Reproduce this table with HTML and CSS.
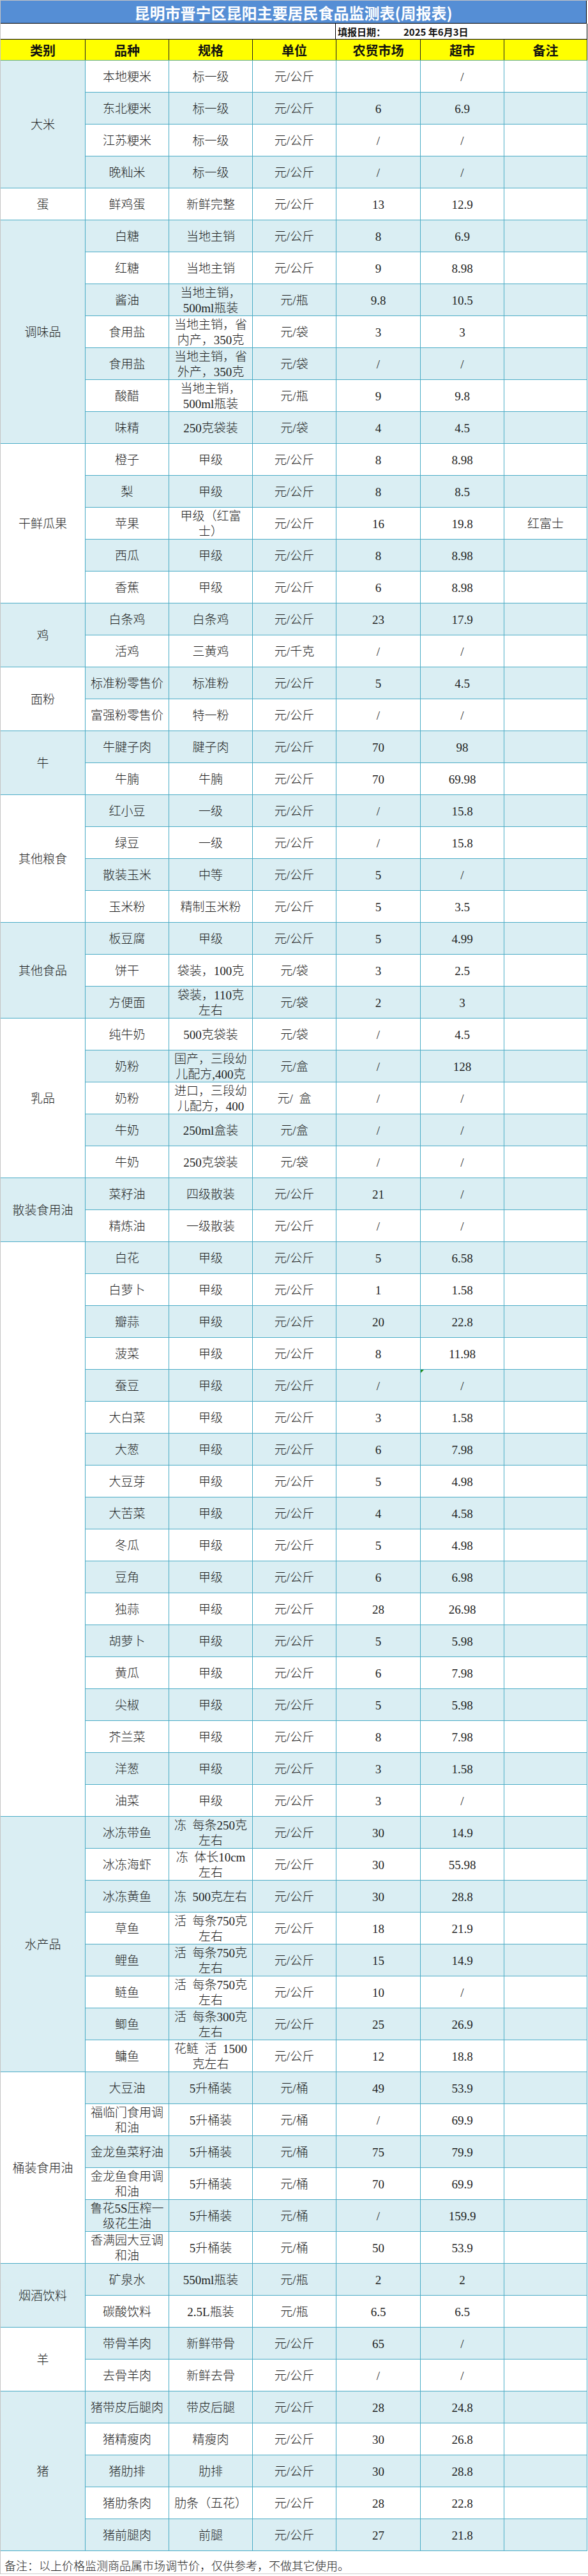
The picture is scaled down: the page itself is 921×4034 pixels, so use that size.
FILE: index.html
```html
<!DOCTYPE html>
<html lang="zh-CN">
<head>
<meta charset="utf-8">
<title>昆明市晋宁区昆阳主要居民食品监测表(周报表)</title>
<link rel="stylesheet" href="styles.css">
</head>
<body>
<div class="sheet">
  <div class="title">昆明市晋宁区昆阳主要居民食品监测表(周报表)</div>
  <div class="daterow">
    <div class="blank"></div>
    <div class="datecell"><span class="dlabel">填报日期：</span><span>2025 年6月3日</span></div>
  </div>
  <div class="head">
    <div>类别</div><div>品种</div><div>规格</div><div>单位</div><div>农贸市场</div><div>超市</div><div>备注</div>
  </div>
  <div class="grid">
    <div class="k s4 b">大米</div>
    <div class="r"><div>本地粳米</div><div>标一级</div><div>元/公斤</div><div></div><div>/</div><div></div></div>
    <div class="r b"><div>东北粳米</div><div>标一级</div><div>元/公斤</div><div>6</div><div>6.9</div><div></div></div>
    <div class="r"><div>江苏粳米</div><div>标一级</div><div>元/公斤</div><div>/</div><div>/</div><div></div></div>
    <div class="r b"><div>晚籼米</div><div>标一级</div><div>元/公斤</div><div>/</div><div>/</div><div></div></div>

    <div class="k s1">蛋</div>
    <div class="r"><div>鲜鸡蛋</div><div>新鲜完整</div><div>元/公斤</div><div>13</div><div>12.9</div><div></div></div>

    <div class="k s7 b">调味品</div>
    <div class="r b"><div>白糖</div><div>当地主销</div><div>元/公斤</div><div>8</div><div>6.9</div><div></div></div>
    <div class="r"><div>红糖</div><div>当地主销</div><div>元/公斤</div><div>9</div><div>8.98</div><div></div></div>
    <div class="r b"><div>酱油</div><div>当地主销，<br>500ml瓶装</div><div>元/瓶</div><div>9.8</div><div>10.5</div><div></div></div>
    <div class="r"><div>食用盐</div><div>当地主销，省<br>内产，350克</div><div>元/袋</div><div>3</div><div>3</div><div></div></div>
    <div class="r b"><div>食用盐</div><div>当地主销，省<br>外产，350克</div><div>元/袋</div><div>/</div><div>/</div><div></div></div>
    <div class="r"><div>酸醋</div><div>当地主销，<br>500ml瓶装</div><div>元/瓶</div><div>9</div><div>9.8</div><div></div></div>
    <div class="r b"><div>味精</div><div>250克袋装</div><div>元/袋</div><div>4</div><div>4.5</div><div></div></div>

    <div class="k s5">干鲜瓜果</div>
    <div class="r"><div>橙子</div><div>甲级</div><div>元/公斤</div><div>8</div><div>8.98</div><div></div></div>
    <div class="r b"><div>梨</div><div>甲级</div><div>元/公斤</div><div>8</div><div>8.5</div><div></div></div>
    <div class="r"><div>苹果</div><div>甲级（红富<br>士）</div><div>元/公斤</div><div>16</div><div>19.8</div><div>红富士</div></div>
    <div class="r b"><div>西瓜</div><div>甲级</div><div>元/公斤</div><div>8</div><div>8.98</div><div></div></div>
    <div class="r"><div>香蕉</div><div>甲级</div><div>元/公斤</div><div>6</div><div>8.98</div><div></div></div>

    <div class="k s2 b">鸡</div>
    <div class="r b"><div>白条鸡</div><div>白条鸡</div><div>元/公斤</div><div>23</div><div>17.9</div><div></div></div>
    <div class="r"><div>活鸡</div><div>三黄鸡</div><div>元/千克</div><div>/</div><div>/</div><div></div></div>

    <div class="k s2">面粉</div>
    <div class="r b"><div>标准粉零售价</div><div>标准粉</div><div>元/公斤</div><div>5</div><div>4.5</div><div></div></div>
    <div class="r"><div>富强粉零售价</div><div>特一粉</div><div>元/公斤</div><div>/</div><div>/</div><div></div></div>

    <div class="k s2 b">牛</div>
    <div class="r b"><div>牛腱子肉</div><div>腱子肉</div><div>元/公斤</div><div>70</div><div>98</div><div></div></div>
    <div class="r"><div>牛腩</div><div>牛腩</div><div>元/公斤</div><div>70</div><div>69.98</div><div></div></div>

    <div class="k s4">其他粮食</div>
    <div class="r b"><div>红小豆</div><div>一级</div><div>元/公斤</div><div>/</div><div>15.8</div><div></div></div>
    <div class="r"><div>绿豆</div><div>一级</div><div>元/公斤</div><div>/</div><div>15.8</div><div></div></div>
    <div class="r b"><div>散装玉米</div><div>中等</div><div>元/公斤</div><div>5</div><div>/</div><div></div></div>
    <div class="r"><div>玉米粉</div><div>精制玉米粉</div><div>元/公斤</div><div>5</div><div>3.5</div><div></div></div>

    <div class="k s3 b">其他食品</div>
    <div class="r b"><div>板豆腐</div><div>甲级</div><div>元/公斤</div><div>5</div><div>4.99</div><div></div></div>
    <div class="r"><div>饼干</div><div>袋装，100克</div><div>元/袋</div><div>3</div><div>2.5</div><div></div></div>
    <div class="r b"><div>方便面</div><div>袋装，110克<br>左右</div><div>元/袋</div><div>2</div><div>3</div><div></div></div>

    <div class="k s5">乳品</div>
    <div class="r"><div>纯牛奶</div><div>500克袋装</div><div>元/袋</div><div>/</div><div>4.5</div><div></div></div>
    <div class="r b"><div>奶粉</div><div>国产，三段幼<br>儿配方,400克</div><div>元/盒</div><div>/</div><div>128</div><div></div></div>
    <div class="r"><div>奶粉</div><div>进口，三段幼<br>儿配方，400</div><div>元/&ensp;盒</div><div>/</div><div>/</div><div></div></div>
    <div class="r b"><div>牛奶</div><div>250ml盒装</div><div>元/盒</div><div>/</div><div>/</div><div></div></div>
    <div class="r"><div>牛奶</div><div>250克袋装</div><div>元/袋</div><div>/</div><div>/</div><div></div></div>

    <div class="k s2 b">散装食用油</div>
    <div class="r b"><div>菜籽油</div><div>四级散装</div><div>元/公斤</div><div>21</div><div>/</div><div></div></div>
    <div class="r"><div>精炼油</div><div>一级散装</div><div>元/公斤</div><div>/</div><div>/</div><div></div></div>

    <div class="k s18"></div>
    <div class="r b"><div>白花</div><div>甲级</div><div>元/公斤</div><div>5</div><div>6.58</div><div></div></div>
    <div class="r"><div>白萝卜</div><div>甲级</div><div>元/公斤</div><div>1</div><div>1.58</div><div></div></div>
    <div class="r b"><div>瓣蒜</div><div>甲级</div><div>元/公斤</div><div>20</div><div>22.8</div><div></div></div>
    <div class="r"><div>菠菜</div><div>甲级</div><div>元/公斤</div><div>8</div><div>11.98</div><div></div></div>
    <div class="r b"><div>蚕豆</div><div>甲级</div><div>元/公斤</div><div>/</div><div class="tri">/</div><div></div></div>
    <div class="r"><div>大白菜</div><div>甲级</div><div>元/公斤</div><div>3</div><div>1.58</div><div></div></div>
    <div class="r b"><div>大葱</div><div>甲级</div><div>元/公斤</div><div>6</div><div>7.98</div><div></div></div>
    <div class="r"><div>大豆芽</div><div>甲级</div><div>元/公斤</div><div>5</div><div>4.98</div><div></div></div>
    <div class="r b"><div>大苦菜</div><div>甲级</div><div>元/公斤</div><div>4</div><div>4.58</div><div></div></div>
    <div class="r"><div>冬瓜</div><div>甲级</div><div>元/公斤</div><div>5</div><div>4.98</div><div></div></div>
    <div class="r b"><div>豆角</div><div>甲级</div><div>元/公斤</div><div>6</div><div>6.98</div><div></div></div>
    <div class="r"><div>独蒜</div><div>甲级</div><div>元/公斤</div><div>28</div><div>26.98</div><div></div></div>
    <div class="r b"><div>胡萝卜</div><div>甲级</div><div>元/公斤</div><div>5</div><div>5.98</div><div></div></div>
    <div class="r"><div>黄瓜</div><div>甲级</div><div>元/公斤</div><div>6</div><div>7.98</div><div></div></div>
    <div class="r b"><div>尖椒</div><div>甲级</div><div>元/公斤</div><div>5</div><div>5.98</div><div></div></div>
    <div class="r"><div>芥兰菜</div><div>甲级</div><div>元/公斤</div><div>8</div><div>7.98</div><div></div></div>
    <div class="r b"><div>洋葱</div><div>甲级</div><div>元/公斤</div><div>3</div><div>1.58</div><div></div></div>
    <div class="r"><div>油菜</div><div>甲级</div><div>元/公斤</div><div>3</div><div>/</div><div></div></div>

    <div class="k s8 b">水产品</div>
    <div class="r b"><div>冰冻带鱼</div><div>冻&ensp;每条250克<br>左右</div><div>元/公斤</div><div>30</div><div>14.9</div><div></div></div>
    <div class="r"><div>冰冻海虾</div><div>冻&ensp;体长10cm<br>左右</div><div>元/公斤</div><div>30</div><div>55.98</div><div></div></div>
    <div class="r b"><div>冰冻黄鱼</div><div>冻&ensp;500克左右</div><div>元/公斤</div><div>30</div><div>28.8</div><div></div></div>
    <div class="r"><div>草鱼</div><div>活&ensp;每条750克<br>左右</div><div>元/公斤</div><div>18</div><div>21.9</div><div></div></div>
    <div class="r b"><div>鲤鱼</div><div>活&ensp;每条750克<br>左右</div><div>元/公斤</div><div>15</div><div>14.9</div><div></div></div>
    <div class="r"><div>鲢鱼</div><div>活&ensp;每条750克<br>左右</div><div>元/公斤</div><div>10</div><div>/</div><div></div></div>
    <div class="r b"><div>鲫鱼</div><div>活&ensp;每条300克<br>左右</div><div>元/公斤</div><div>25</div><div>26.9</div><div></div></div>
    <div class="r"><div>鳙鱼</div><div>花鲢&ensp;活&ensp;1500<br>克左右</div><div>元/公斤</div><div>12</div><div>18.8</div><div></div></div>

    <div class="k s6">桶装食用油</div>
    <div class="r b"><div>大豆油</div><div>5升桶装</div><div>元/桶</div><div>49</div><div>53.9</div><div></div></div>
    <div class="r"><div>福临门食用调<br>和油</div><div>5升桶装</div><div>元/桶</div><div>/</div><div>69.9</div><div></div></div>
    <div class="r b"><div>金龙鱼菜籽油</div><div>5升桶装</div><div>元/桶</div><div>75</div><div>79.9</div><div></div></div>
    <div class="r"><div>金龙鱼食用调<br>和油</div><div>5升桶装</div><div>元/桶</div><div>70</div><div>69.9</div><div></div></div>
    <div class="r b"><div>鲁花5S压榨一<br>级花生油</div><div>5升桶装</div><div>元/桶</div><div>/</div><div>159.9</div><div></div></div>
    <div class="r"><div>香满园大豆调<br>和油</div><div>5升桶装</div><div>元/桶</div><div>50</div><div>53.9</div><div></div></div>

    <div class="k s2 b">烟酒饮料</div>
    <div class="r b"><div>矿泉水</div><div>550ml瓶装</div><div>元/瓶</div><div>2</div><div>2</div><div></div></div>
    <div class="r"><div>碳酸饮料</div><div>2.5L瓶装</div><div>元/瓶</div><div>6.5</div><div>6.5</div><div></div></div>

    <div class="k s2">羊</div>
    <div class="r b"><div>带骨羊肉</div><div>新鲜带骨</div><div>元/公斤</div><div>65</div><div>/</div><div></div></div>
    <div class="r"><div>去骨羊肉</div><div>新鲜去骨</div><div>元/公斤</div><div>/</div><div>/</div><div></div></div>

    <div class="k s5 b">猪</div>
    <div class="r b"><div>猪带皮后腿肉</div><div>带皮后腿</div><div>元/公斤</div><div>28</div><div>24.8</div><div></div></div>
    <div class="r"><div>猪精瘦肉</div><div>精瘦肉</div><div>元/公斤</div><div>30</div><div>26.8</div><div></div></div>
    <div class="r b"><div>猪肋排</div><div>肋排</div><div>元/公斤</div><div>30</div><div>28.8</div><div></div></div>
    <div class="r"><div>猪肋条肉</div><div>肋条（五花）</div><div>元/公斤</div><div>28</div><div>22.8</div><div></div></div>
    <div class="r b"><div>猪前腿肉</div><div>前腿</div><div>元/公斤</div><div>27</div><div>21.8</div><div></div></div>
  </div>
  <div class="note">备注：以上价格监测商品属市场调节价，仅供参考，不做其它使用。</div>
</div>
</body>
</html>
```
FILE: styles.css
```css
html, body {
  margin: 0;
  padding: 0;
  background: #ffffff;
}

body {
  font-family: "Liberation Serif", "Noto Sans CJK SC", serif;
  color: #1e1e1e;
}

.sheet {
  width: 920px;
  border-left: 1px solid #c4c4c4;
  border-top: 1px solid #c4c4c4;
}

.title {
  width: 918px;
  height: 36px;
  box-sizing: border-box;
  padding-top: 2px;
  background: #558ed5;
  color: #ffffff;
  font-family: "Noto Sans CJK SC", sans-serif;
  font-weight: 700;
  font-size: 24px;
  line-height: 34px;
  text-align: center;
  border-right: 1px solid #000000;
  border-bottom: 1px solid #000000;
}

.daterow {
  display: flex;
  width: 918px;
  height: 24px;
  border-right: 1px solid #000000;
  border-bottom: 1px solid #000000;
  background: #ffffff;
}

.blank {
  width: 524px;
  border-right: 1px solid #000000;
}

.datecell {
  flex: 1;
  padding-left: 3px;
  font-family: "Noto Sans CJK SC", sans-serif;
  font-weight: 700;
  font-size: 15px;
  line-height: 25px;
  white-space: nowrap;
  color: #111111;
}

.dlabel {
  display: inline-block;
  width: 103px;
}

.head {
  display: grid;
  grid-template-columns: 132px 130px 130px 130px 131px 130px 129px;
  grid-template-rows: 32px;
  column-gap: 1px;
  width: 918px;
  background: #222222;
  border-right: 1px solid #222222;
  border-bottom: 1px solid #63b09c;
}

.head > div {
  background: #ffff00;
  display: flex;
  align-items: center;
  justify-content: center;
  font-family: "Noto Sans CJK SC", sans-serif;
  font-weight: 700;
  font-size: 20px;
  color: #111111;
  padding-top: 1px;
}

.grid {
  display: grid;
  grid-template-columns: 132px 130px 130px 130px 131px 130px 129px;
  grid-auto-rows: 49px;
  gap: 1px;
  width: 918px;
  background: #4bacc6;
  border-right: 1px solid #4bacc6;
  border-bottom: 1px solid #4bacc6;
  font-size: 19px;
  font-weight: 300;
}

.r {
  display: contents;
}

.r > div,
.k {
  background: #ffffff;
  display: flex;
  align-items: center;
  justify-content: center;
  text-align: center;
  box-sizing: border-box;
  padding-top: 3px;
  line-height: 24px;
  white-space: nowrap;
  overflow: hidden;
}

.r.b > div,
.k.b {
  background: #daeef3;
}

.k {
  grid-column: 1;
}

.s1 { grid-row: span 1; }
.s2 { grid-row: span 2; }
.s3 { grid-row: span 3; }
.s4 { grid-row: span 4; }
.s5 { grid-row: span 5; }
.s6 { grid-row: span 6; }
.s7 { grid-row: span 7; }
.s8 { grid-row: span 8; }
.s18 { grid-row: span 18; }

.r > .tri {
  position: relative;
}

.r > .tri::before {
  content: "";
  position: absolute;
  left: 0;
  top: 0;
  border-top: 5px solid #1a8a1a;
  border-right: 5px solid transparent;
}

.note {
  height: 36px;
  box-sizing: border-box;
  padding: 12px 0 0 6px;
  font-size: 18px;
  line-height: 24px;
  font-weight: 300;
  white-space: nowrap;
  border-bottom: 1px solid #d0d0d0;
}
```
